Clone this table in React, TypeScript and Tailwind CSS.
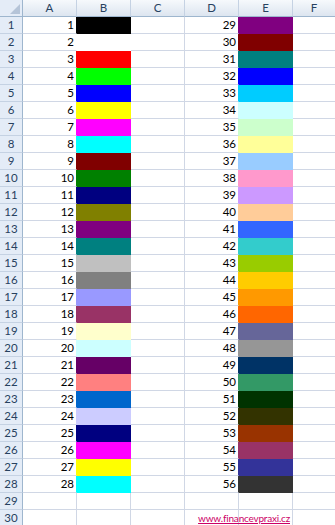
import React from 'react';

// Excel 56-colour palette (ColorIndex 1..56)
const palette: string[] = [
  '#000000', '#FFFFFF', '#FF0000', '#00FF00', '#0000FF', '#FFFF00', '#FF00FF', '#00FFFF',
  '#800000', '#008000', '#000080', '#808000', '#800080', '#008080', '#C0C0C0', '#808080',
  '#9999FF', '#993366', '#FFFFCC', '#CCFFFF', '#660066', '#FF8080', '#0066CC', '#CCCCFF',
  '#000080', '#FF00FF', '#FFFF00', '#00FFFF', '#800080', '#800000', '#008080', '#0000FF',
  '#00CCFF', '#CCFFFF', '#CCFFCC', '#FFFF99', '#99CCFF', '#FF99CC', '#CC99FF', '#FFCC99',
  '#3366FF', '#33CCCC', '#99CC00', '#FFCC00', '#FF9900', '#FF6600', '#666699', '#969696',
  '#003366', '#339966', '#003300', '#333300', '#993300', '#993366', '#333399', '#333333',
];

const columns = ['A', 'B', 'C', 'D', 'E', 'F'];

const Row: React.FC<{ n: number }> = ({ n }) => {
  const left = n <= 28 ? n : null;
  const right = n <= 28 ? n + 28 : null;
  const leftFill = left ? palette[left - 1] : null;
  const rightFill = right ? palette[right - 1] : null;

  return (
    <div className="flex h-[17px]">
      {/* row header */}
      <div className="w-[23px] shrink-0 border-r border-b border-r-[#9eb6ce] border-b-[#c5d2e3] bg-[#e4ecf7] text-[#27415f] text-center leading-[16px]">
        {n}
      </div>
      {/* A */}
      <div
        className="w-[54px] shrink-0 border-r border-b border-[#d0d7e5] text-right pr-[2px] leading-[16px] text-black"
        style={leftFill ? { borderRightColor: leftFill } : undefined}
      >
        {left ?? ''}
      </div>
      {/* B */}
      <div
        className="w-[54px] shrink-0 border-r border-b border-[#d0d7e5]"
        style={leftFill ? { backgroundColor: leftFill, borderColor: leftFill } : undefined}
      />
      {/* C */}
      <div className="w-[54px] shrink-0 border-r border-b border-[#d0d7e5]" />
      {/* D */}
      <div
        className="w-[54px] shrink-0 border-r border-b border-[#d0d7e5] text-right pr-[2px] leading-[16px] text-black"
        style={rightFill ? { borderRightColor: rightFill } : undefined}
      >
        {right ?? ''}
      </div>
      {/* E */}
      <div
        className="relative w-[54px] shrink-0 border-r border-b border-[#d0d7e5]"
        style={rightFill ? { backgroundColor: rightFill, borderColor: rightFill } : undefined}
      >
        {n === 30 && (
          <a
            href="#"
            className="absolute right-[2px] top-0 whitespace-nowrap text-[10px] tracking-[-0.2px] leading-[16px] text-[#cc0066] underline"
          >
            www.financevpraxi.cz
          </a>
        )}
      </div>
      {/* F */}
      <div className="flex-1 border-b border-[#d0d7e5]" />
    </div>
  );
};

const App: React.FC = () => {
  const rows = Array.from({ length: 30 }, (_, i) => i + 1);

  return (
    <div className="w-[335px] h-[525px] overflow-hidden bg-white font-['Lato',sans-serif] text-[11.5px]">
      {/* column headers */}
      <div className="flex h-[17px] bg-gradient-to-b from-[#f6f9fc] to-[#dbe4ef] text-[#27415f]">
        <div className="relative w-[23px] shrink-0 border-r border-b border-[#9eb6ce] bg-[#e4ecf7]">
          <svg className="absolute right-[2px] bottom-[2px]" width="10" height="10" viewBox="0 0 10 10">
            <polygon points="10,0 10,10 0,10" fill="#b5c4d8" />
          </svg>
        </div>
        {columns.map((c) => (
          <div
            key={c}
            className={`${c === 'F' ? 'flex-1' : 'w-[54px] shrink-0 border-r border-r-[#c5d2e3]'} border-b border-b-[#9eb6ce] text-center leading-[16px]`}
          >
            {c}
          </div>
        ))}
      </div>

      {rows.map((n) => (
        <Row key={n} n={n} />
      ))}
    </div>
  );
};

export default App;
